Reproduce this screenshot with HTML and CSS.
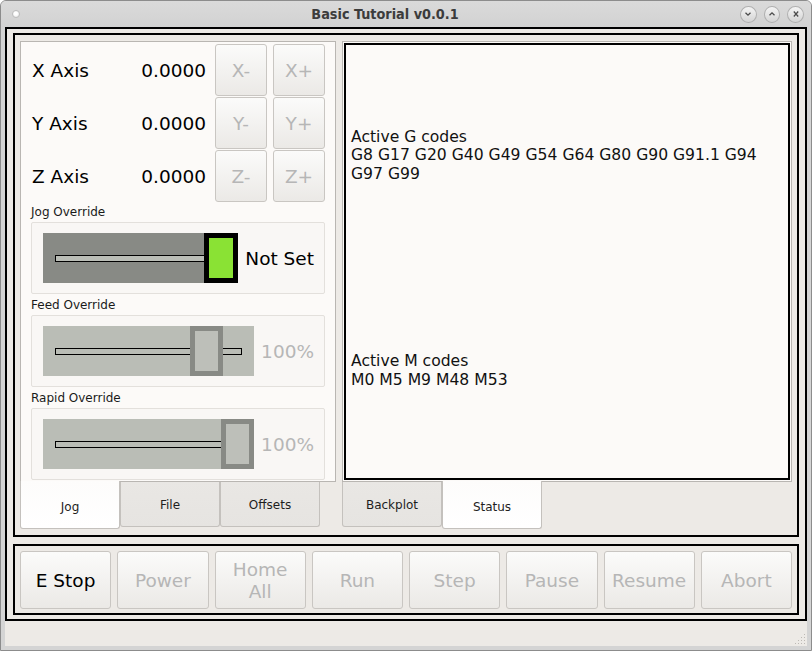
FILE: index.html
```html
<!DOCTYPE html>
<html>
<head>
<meta charset="utf-8">
<title>Basic Tutorial v0.0.1</title>
<link rel="stylesheet" href="styles.css">
</head>
<body>
<div class="window">
  <div class="titlebar">
    <div class="tb-left"><span class="menu-dot"></span></div>
    <div class="title">Basic Tutorial v0.0.1</div>
    <div class="tb-right">
      <span class="wm-btn"><svg width="8" height="8" viewBox="0 0 8 8"><path d="M1.5 2.8 L4 5.2 L6.5 2.8" fill="none" stroke="#4a4a4a" stroke-width="1.3"/></svg></span>
      <span class="wm-btn"><svg width="8" height="8" viewBox="0 0 8 8"><path d="M1.5 5.2 L4 2.8 L6.5 5.2" fill="none" stroke="#4a4a4a" stroke-width="1.3"/></svg></span>
      <span class="wm-btn"><svg width="8" height="8" viewBox="0 0 8 8"><path d="M1.8 1.5 L6.2 6.5 M6.2 1.5 L1.8 6.5" fill="none" stroke="#4a4a4a" stroke-width="1.2"/></svg></span>
    </div>
  </div>
  <div class="client">
    <div class="outer-frame">
      <div class="top-frame">
        <div class="tabwidget tw-left">
          <div class="pane pane-left">
            <div class="axes">
              <div class="axis-row"><span class="axis-label">X Axis</span><span class="axis-value">0.0000</span><span class="btn sq">X-</span><span class="btn sq">X+</span></div>
              <div class="axis-row"><span class="axis-label">Y Axis</span><span class="axis-value">0.0000</span><span class="btn sq">Y-</span><span class="btn sq">Y+</span></div>
              <div class="axis-row"><span class="axis-label">Z Axis</span><span class="axis-value">0.0000</span><span class="btn sq">Z-</span><span class="btn sq">Z+</span></div>
            </div>
            <div class="ov-label">Jog Override</div>
            <div class="ov-box">
              <div class="slider slider-jog"><div class="groove groove-jog"></div><div class="handle handle-jog"></div></div>
              <span class="ov-value ov-active">Not Set</span>
            </div>
            <div class="ov-label">Feed Override</div>
            <div class="ov-box">
              <div class="slider slider-off"><div class="groove"></div><div class="handle handle-off handle-feed"></div></div>
              <span class="ov-value">100%</span>
            </div>
            <div class="ov-label">Rapid Override</div>
            <div class="ov-box">
              <div class="slider slider-off"><div class="groove"></div><div class="handle handle-off handle-rapid"></div></div>
              <span class="ov-value">100%</span>
            </div>
          </div>
          <div class="tabbar">
            <div class="tab active">Jog</div>
            <div class="tab">File</div>
            <div class="tab">Offsets</div>
          </div>
        </div>
        <div class="tabwidget tw-right">
          <div class="pane pane-right">
            <div class="status-area">
              <div class="codes"><p>Active G codes<br>G8 G17 G20 G40 G49 G54 G64 G80 G90 G91.1 G94 G97 G99</p></div>
              <div class="codes"><p>Active M codes<br>M0 M5 M9 M48 M53</p></div>
            </div>
          </div>
          <div class="tabbar">
            <div class="tab">Backplot</div>
            <div class="tab active">Status</div>
          </div>
        </div>
      </div>
      <div class="bottom-frame">
        <span class="btn big enabled">E Stop</span>
        <span class="btn big">Power</span>
        <span class="btn big">Home<br>All</span>
        <span class="btn big">Run</span>
        <span class="btn big">Step</span>
        <span class="btn big">Pause</span>
        <span class="btn big">Resume</span>
        <span class="btn big">Abort</span>
      </div>
    </div>
    <div class="statusbar">
      <svg class="grip" width="12" height="12" viewBox="0 0 12 12" fill="#bdb9b4">
        <rect x="10" y="1" width="1" height="1"/>
        <rect x="7" y="4" width="1" height="1"/><rect x="10" y="4" width="1" height="1"/>
        <rect x="4" y="7" width="1" height="1"/><rect x="7" y="7" width="1" height="1"/><rect x="10" y="7" width="1" height="1"/>
        <rect x="1" y="10" width="1" height="1"/><rect x="4" y="10" width="1" height="1"/><rect x="7" y="10" width="1" height="1"/><rect x="10" y="10" width="1" height="1"/>
      </svg>
    </div>
  </div>
</div>
</body>
</html>
```

FILE: styles.css
```css
* { box-sizing: border-box; }
html, body { margin: 0; padding: 0; }
body {
  width: 812px;
  height: 651px;
  overflow: hidden;
  background: #ffffff;
  font-family: "DejaVu Sans", "Liberation Sans", sans-serif;
  color: #000;
}

.window {
  width: 812px;
  height: 651px;
  border: 1px solid #8c8c8c;
  border-radius: 6px 6px 0 0;
  background: #d4d4d4;
  padding: 0 4px 4px;
  display: flex;
  flex-direction: column;
}

/* ---------- title bar ---------- */
.titlebar {
  height: 26px;
  margin: 0 -4px;
  display: flex;
  align-items: center;
  background: linear-gradient(#dadada, #d2d2d2);
  border-radius: 5px 5px 0 0;
}
.tb-left {
  width: 29px;
  padding-left: 11px;
  display: flex;
  align-items: center;
}
.menu-dot {
  width: 8px;
  height: 8px;
  border-radius: 50%;
  background: radial-gradient(circle at 45% 40%, #ffffff 30%, #e2e2e2 100%);
  border: 1px solid #bcbcbc;
}
.title {
  flex: 1;
  text-align: center;
  font-size: 14.3px;
  font-weight: bold;
  font-stretch: condensed;
  color: #3c3c3c;
}
.tb-right {
  width: 71px;
  display: flex;
  gap: 7px;
  padding-right: 7px;
  justify-content: flex-end;
}
.wm-btn {
  width: 17px;
  height: 17px;
  border-radius: 50%;
  border: 1px solid #b0b0b0;
  background: linear-gradient(#f4f4f4, #d4d4d4);
  display: flex;
  align-items: center;
  justify-content: center;
}

/* ---------- client ---------- */
.client {
  flex: 1;
  background: #edeae6;
  display: flex;
  flex-direction: column;
}
.outer-frame {
  height: 594px;
  border: 2px solid #000;
  padding: 4px 6px;
  display: flex;
  flex-direction: column;
  gap: 7px;
}
.top-frame {
  height: 504px;
  border: 2px solid #000;
  padding: 6px 5px;
  display: flex;
  gap: 6px;
}
.bottom-frame {
  height: 71px;
  border: 2px solid #000;
  padding: 5px 5px 4px;
  display: flex;
  gap: 6px;
}
.statusbar {
  flex: 1;
  position: relative;
}
.grip {
  position: absolute;
  right: 1px;
  bottom: 1px;
}

/* ---------- tab widgets ---------- */
.tabwidget {
  display: flex;
  flex-direction: column;
}
.tw-left { width: 316px; }
.tw-right { width: 450px; }
.pane {
  height: 441px;
  border: 1px solid #b9b6b2;
  background: #fcfaf8;
}
.pane-left {
  padding: 2px 10px 0;
}
.pane-right {
  padding: 1px;
}
.tabbar {
  display: flex;
  height: 47px;
}
.tab {
  width: 100px;
  height: 45px;
  padding-top: 2px;
  border: 1px solid #c4c1bd;
  border-top: none;
  border-radius: 0 0 3px 3px;
  background: linear-gradient(#e9e7e4, #e6e4e1);
  font-size: 12px;
  color: #1e1e1e;
  display: flex;
  align-items: center;
  justify-content: center;
}
.tab.active {
  height: 48px;
  margin-top: -1px;
  padding-top: 5px;
  background: linear-gradient(#fdfcfb, #ffffff);
  position: relative;
  z-index: 1;
}

/* ---------- axes ---------- */
.axes {
  display: flex;
  flex-direction: column;
  gap: 1px;
}
.axis-row {
  height: 52px;
  display: flex;
  align-items: center;
}
.axis-label {
  flex: 1;
  font-size: 18.5px;
  padding-left: 1px;
}
.axis-value {
  font-size: 18.5px;
  margin-right: 9px;
}
.btn {
  border: 1px solid #c9c6c2;
  border-radius: 3px;
  background: linear-gradient(#fbfbfa, #ebe9e6);
  color: #b6b6b6;
  font-size: 18.5px;
  display: flex;
  align-items: center;
  justify-content: center;
  text-align: center;
}
.sq {
  width: 52px;
  height: 52px;
}
.sq + .sq { margin-left: 6px; }
.big {
  flex: 1;
  height: 58px;
  line-height: 22px;
  padding-top: 1px;
}
.btn.enabled { color: #000; }

/* ---------- overrides ---------- */
.ov-label {
  font-size: 12px;
  line-height: 16px;
  margin: 2px 0 2px;
  color: #1a1a1a;
}
.ov-box + .ov-label { margin-top: 3px; }
.ov-box {
  height: 72px;
  border: 1px solid #e3e0dc;
  border-radius: 2px;
  background: #f9f7f5;
  padding: 10px 10px 10px 11px;
  display: flex;
  align-items: center;
}
.slider {
  flex: 1;
  height: 50px;
  position: relative;
}
.slider-jog { background: #888a85; }
.slider-off { background: #babdb6; }
.groove {
  position: absolute;
  left: 12px;
  right: 12px;
  top: 22px;
  height: 7px;
  border: 1px solid #000;
  background: #babdb6;
}
.handle {
  position: absolute;
  top: 0;
  height: 50px;
}
.handle-jog {
  right: 0;
  width: 34px;
  border: 5px solid #000;
  background: #8ae234;
}
.handle-off {
  width: 33px;
  border: 5px solid #888a85;
  background: #bdbfb9;
}
.handle-feed { left: 147px; }
.handle-rapid { right: 0; }
.ov-value {
  margin-left: 7px;
  font-size: 18.5px;
  color: #b6b6b6;
}
.ov-value.ov-active { color: #000; }

/* ---------- status area ---------- */
.status-area {
  height: 100%;
  border: 2px solid #000;
  padding: 3px 5px 0;
  display: flex;
  flex-direction: column;
}
.codes {
  flex: 1;
  display: flex;
  align-items: center;
}
.codes p {
  margin: 0;
  font-size: 15.6px;
  line-height: 18.6px;
  color: #111;
}
```
